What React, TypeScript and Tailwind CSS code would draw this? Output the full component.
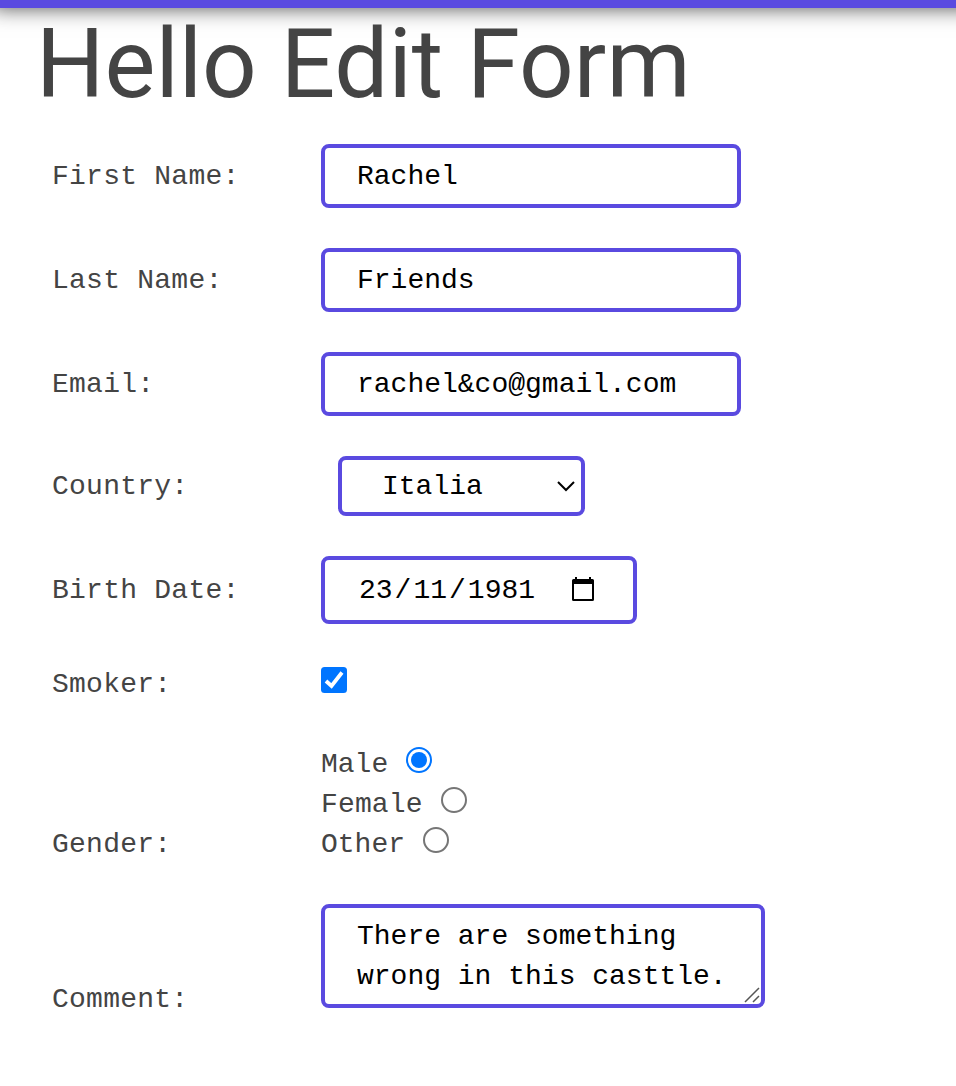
import type { ReactNode } from "react";

const field =
  "block rounded-[8px] border-4 border-[#5a4ae0] bg-white text-black outline-none";

function Row({ label, className, labelClass, children }: { label: string; className: string; labelClass: string; children: ReactNode }) {
  return (
    <div className={`flex ${className}`}>
      <div className={`w-[269px] shrink-0 tracking-[0.25px] ${labelClass}`}>{label}</div>
      {children}
    </div>
  );
}

function Radio({ label, checked, className = "" }: { label: string; checked?: boolean; className?: string }) {
  return (
    <label className={`flex h-10 whitespace-pre ${className}`}>
      <span>{label} </span>
      <svg width="28" height="28" viewBox="0 0 28 28" className="mt-[1px]">
        <circle cx="14" cy="14" r="12" fill="white" stroke={checked ? "#0075ff" : "#767676"} strokeWidth="2" />
        {checked && <circle cx="14" cy="14" r="8" fill="#0075ff" />}
      </svg>
    </label>
  );
}

export default function App() {
  return (
    <div className="flex h-[1086px] w-full flex-col overflow-hidden bg-white font-['Liberation_Mono',monospace] text-[28px] leading-[40px] text-[#444]">
      <header className="-mt-[72px] -mr-10 -ml-2 h-20 shrink-0 bg-[#5a4ae0] shadow-[0_0_20px_rgba(0,0,0,0.7)]" />
      <h1 className="ml-[36px] h-[136px] shrink-0 font-['Roboto',sans-serif] text-[96px] leading-[112px] text-[#444]">Hello Edit Form</h1>
      <form className="ml-[52px]">
        <Row label="First Name:" className="h-[104px]" labelClass="pt-[13px]">
          <input className={`${field} h-16 w-[420px] px-8`} defaultValue="Rachel" />
        </Row>
        <Row label="Last Name:" className="h-[104px]" labelClass="pt-[13px]">
          <input className={`${field} h-16 w-[420px] px-8`} defaultValue="Friends" />
        </Row>
        <Row label="Email:" className="h-[104px]" labelClass="pt-[13px]">
          <input className={`${field} h-16 w-[420px] px-8`} defaultValue="rachel&co@gmail.com" />
        </Row>
        <Row label="Country:" className="h-[100px]" labelClass="pt-[11px]">
          <div className={`${field} ml-[17px] flex h-[60px] w-[247px] items-center justify-between pr-[4px] pl-10`}>
            <span className="pt-[2px]">Italia</span>
            <svg width="22" height="16" viewBox="0 0 22 16" fill="none" stroke="black" strokeWidth="2">
              <path d="M3 4 L11 12 L19 4" />
            </svg>
          </div>
        </Row>
        <Row label="Birth Date:" className="h-[108px]" labelClass="pt-[15px]">
          <div className={`${field} flex h-[68px] w-[316px] items-center pl-8`}>
            <div className="flex pt-[2px]">
              <span className="px-[2px]">23</span>
              <span>/</span>
              <span className="px-[2px]">11</span>
              <span>/</span>
              <span className="px-[2px]">1981</span>
            </div>
            <svg width="24" height="26" viewBox="0 0 24 26" className="mb-[2px] ml-[34px]">
              <path fillRule="evenodd" d="M4 1h2v2h12V1h2v2h1.500Q23 3 23 4.500V23.500Q23 25 21.500 25H2.500Q1 25 1 23.500V4.500Q1 3 2.500 3H4ZM3 8v15h18V8Z" fill="black" />
            </svg>
          </div>
        </Row>
        <Row label="Smoker:" className="h-20" labelClass="pt-[1px]">
          <svg width="26" height="26" viewBox="0 0 26 26" className="mt-[3px]">
            <rect width="26" height="26" rx="3.500" fill="#0075ff" />
            <path d="M5 14 L10.500 19 L21 5.500" fill="none" stroke="white" strokeWidth="3.800" />
          </svg>
        </Row>
        <Row label="Gender:" className="h-[160px]" labelClass="pt-[81px]">
          <div className="pt-[1px]">
            <Radio label="Male" checked />
            <Radio label="Female" className="tracking-[0.15px]" />
            <Radio label="Other" />
          </div>
        </Row>
        <Row label="Comment:" className="" labelClass="pt-[76px]">
          <div className="relative h-[104px]">
            <textarea className={`${field} h-[104px] w-[444px] resize-none overflow-hidden px-8 pt-[9px] pb-[7px]`} defaultValue="There are something wrong in this casttle." />
            <svg width="18" height="18" viewBox="0 0 18 18" className="absolute right-[4px] bottom-[4px]" stroke="#555" strokeWidth="1.500">
              <path d="M2 16 L16 2 M10 16 L16 10" />
            </svg>
          </div>
        </Row>
      </form>
    </div>
  );
}
